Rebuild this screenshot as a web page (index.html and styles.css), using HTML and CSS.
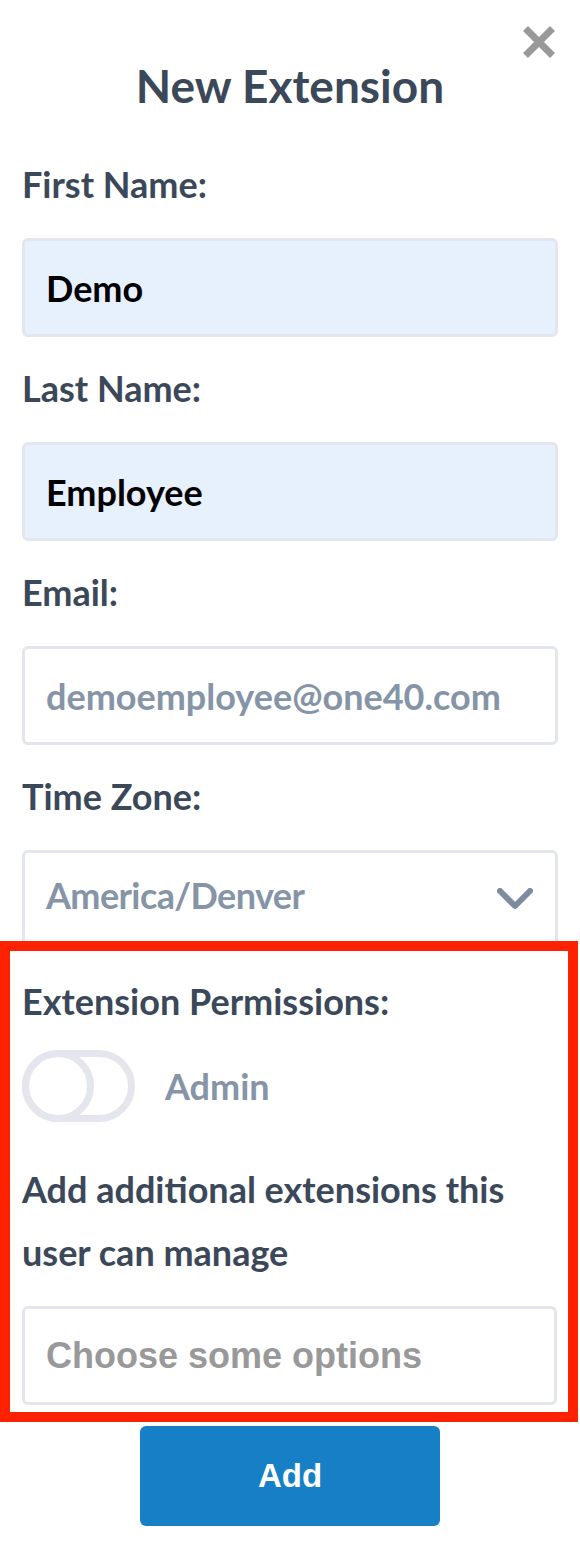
FILE: index.html
```html
<!DOCTYPE html>
<html lang="en">
<head>
  <meta charset="UTF-8">
  <title>New Extension</title>
  <meta name="viewport" content="width=device-width, initial-scale=1">
  <link rel="stylesheet" href="styles.css">
</head>
<body>
  <div class="modal">
    <button class="close" aria-label="Close">
      <svg width="32" height="32" viewBox="0 0 32 32">
        <path d="M2.5 2.5 L29.5 29.5 M29.5 2.5 L2.5 29.5" stroke="#999999" stroke-width="7" fill="none"/>
      </svg>
    </button>

    <h1 class="title">New Extension</h1>

    <form class="form">
      <label class="label">First Name:</label>
      <input class="field filled" type="text" value="Demo">

      <label class="label">Last Name:</label>
      <input class="field filled" type="text" value="Employee">

      <label class="label">Email:</label>
      <input class="field muted" type="text" value="demoemployee@one40.com">

      <label class="label">Time Zone:</label>
      <div class="field select">
        <span class="select-value">America/Denver</span>
        <svg width="36" height="22" viewBox="0 0 36 22">
          <path d="M3 3 L18 18 L33 3" stroke="#7d8b9e" stroke-width="6" stroke-linecap="round" stroke-linejoin="round" fill="none"/>
        </svg>
      </div>

      <div class="highlight">
        <label class="label">Extension Permissions:</label>
        <div class="toggle-row">
          <span class="toggle"></span>
          <span class="toggle-text">Admin</span>
        </div>
        <p class="hint">Add additional extensions this user can manage</p>
        <div class="field chooser">Choose some options</div>
      </div>

      <button type="button" class="add">Add</button>
    </form>
  </div>
</body>
</html>
```

FILE: styles.css
```css
body {
  margin: 0;
  background: #fff;
  font-family: Lato, "Noto Sans", sans-serif;
  color: #3b4859;
}

.modal {
  position: relative;
  padding: 58px 22px 0;
}

.close {
  position: absolute;
  top: 26px;
  right: 25px;
  background: none;
  border: none;
  padding: 0;
  width: 32px;
  height: 32px;
  cursor: pointer;
}

.close svg {
  display: block;
}

.title {
  margin: 0;
  font-size: 46px;
  line-height: 56px;
  font-weight: 700;
  text-align: center;
}

.form {
  display: flex;
  flex-direction: column;
  margin-top: 48px;
}

.label {
  display: block;
  font-size: 36px;
  line-height: 44px;
  font-weight: 700;
  margin-bottom: 32px;
}

.field {
  box-sizing: border-box;
  width: 100%;
  height: 99px;
  margin: 0 0 29px;
  padding: 0 21px;
  border: 3px solid #e3e7ed;
  border-radius: 6px;
  background: #fff;
  font-family: Lato, "Noto Sans", sans-serif;
  font-size: 36px;
  font-weight: 700;
  outline: none;
}

.filled {
  background: #e7f0fd;
  color: #000;
}

.muted {
  color: #8694a7;
}

.select {
  display: flex;
  align-items: center;
  justify-content: space-between;
  padding-right: 22px;
  color: #8694a7;
  margin-bottom: 0;
}

.select-value {
  margin-top: -9px;
  letter-spacing: -0.6px;
}

.select svg {
  margin-top: -2px;
}

.highlight {
  position: relative;
  margin: -8px -20px 0 -22px;
  padding: 28px 11px 7px 12px;
  border: 10px solid #ff2200;
}

.toggle-row {
  display: flex;
  align-items: center;
  gap: 30px;
  margin-top: -5px;
}

.toggle {
  position: relative;
  box-sizing: border-box;
  width: 113px;
  height: 72px;
  border: 7px solid #e3e7ed;
  border-radius: 36px;
}

.toggle::before {
  content: "";
  position: absolute;
  left: -7px;
  top: -7px;
  box-sizing: border-box;
  width: 72px;
  height: 72px;
  border: 7px solid #e3e7ed;
  border-radius: 50%;
}

.toggle-text {
  font-size: 36px;
  line-height: 44px;
  font-weight: 700;
  color: #8694a7;
}

.hint {
  margin: 36px 0 22px;
  font-size: 36px;
  line-height: 63px;
  font-weight: 700;
}

.chooser {
  display: flex;
  align-items: center;
  margin-bottom: 0;
  font-family: "Liberation Sans", Arial, sans-serif;
  color: #999;
}

.add {
  align-self: center;
  width: 300px;
  height: 100px;
  margin-top: 4px;
  border: none;
  border-radius: 6px;
  background: #167fc5;
  color: #fff;
  font-family: "Liberation Sans", Arial, sans-serif;
  font-size: 33px;
  font-weight: 700;
  cursor: pointer;
}
```
